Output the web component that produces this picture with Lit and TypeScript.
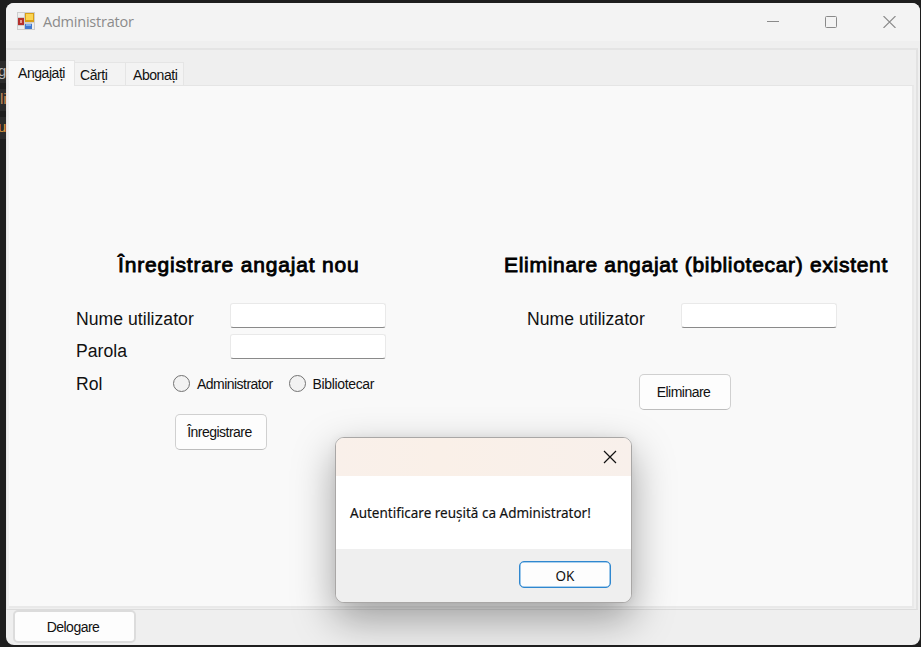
import { LitElement, html, css } from 'lit';
import { customElement, property } from 'lit/decorators.js';

@customElement('message-box')
class MessageBox extends LitElement {
  @property() message = '';

  static styles = css`
    :host {
      display: flex;
      flex-direction: column;
      box-sizing: border-box;
      border: 1px solid #a9a7a6;
      border-radius: 9px;
      overflow: hidden;
      background: #fff;
      font-family: 'Noto Sans', sans-serif;
      color: #111;
      box-shadow: 0 16px 40px 1px rgba(0, 0, 0, 0.34), 0 0 10px rgba(0, 0, 0, 0.06);
    }
    .bar {
      height: 38px;
      display: flex;
      justify-content: flex-end;
      background: linear-gradient(90deg, #f9f0ea, #faf0e8 35%, #f8f0eb);
    }
    .bar svg {
      margin: 12px 14px 0 0;
    }
    .body {
      height: 73px;
      display: flex;
      align-items: center;
      padding-left: 14px;
      font-size: 13.5px;
      -webkit-text-stroke: 0.15px #111;
      white-space: nowrap;
    }
    .foot {
      flex: 1;
      background: #efefef;
      display: flex;
      justify-content: flex-end;
      padding: 12px 20px 0 0;
    }
    .ok {
      box-sizing: border-box;
      width: 92px;
      height: 27px;
      border: 1px solid #2f87cf;
      box-shadow: inset 0 0 0 0.6px #5aa3dd;
      border-radius: 5px;
      background: #fdfdfd;
      font: 13.5px 'Noto Sans', sans-serif;
      color: #111;
      padding: 2px 0 0;
    }
  `;

  render() {
    return html`
      <div class="bar">
        <svg width="14" height="14" viewBox="0 0 14 14" fill="none" stroke="#111" stroke-width="1.2">
          <path d="M1 1L13 13M13 1L1 13" />
        </svg>
      </div>
      <div class="body">${this.message}</div>
      <div class="foot"><button class="ok">OK</button></div>
    `;
  }
}

@customElement('app-root')
class AppRoot extends LitElement {
  static styles = css`
    :host {
      display: block;
      position: relative;
      box-sizing: border-box;
      width: 921px;
      height: 647px;
      padding: 3px 1px 2px 6px;
      overflow: hidden;
      background: #1e1e1e;
      font-family: 'Liberation Sans', Arial, sans-serif;
      color: #111;
    }
    .code {
      position: absolute;
      left: 0;
      width: 6px;
      height: 22px;
      font: 15px/20px 'Liberation Sans', sans-serif;
      text-indent: -2px;
      background: #2b2b2b;
    }
    .c1 { top: 61px; color: #b8b8b8; }
    .c2 { top: 89px; color: #c58a55; text-indent: 0; }
    .c3 { top: 117px; color: #dd9a3f; }
    .window {
      position: relative;
      box-sizing: border-box;
      height: 642px;
      border-radius: 8px;
      overflow: hidden;
      background: #efefef;
      display: flex;
      flex-direction: column;
    }
    .titlebar {
      height: 38px;
      flex: none;
      background: #f3f3f3;
      display: flex;
      align-items: center;
      padding: 0 24px 0 11px;
      color: #8b8b8b;
    }
    .name {
      flex: 1;
      padding-left: 8px;
      margin-top: -2px;
      font: 14.5px 'Open Sans', sans-serif;
      letter-spacing: -0.22px;
    }
    .titlebar > svg {
      margin-top: -2px;
    }
    .controls {
      display: flex;
      gap: 46px;
    }
    .frame {
      height: 562px;
      flex: none;
      margin: 7px 2px 0 0;
      box-sizing: border-box;
      border: 1px solid #e0e0e0;
      border-width: 2px 2px 1px 1px;
      border-color: #e4e4e4 #e2e2e2 #dcdcdc #e6e6e6;
      display: flex;
      flex-direction: column;
      padding: 10px 2px 1px 2px;
    }
    .tabs {
      display: flex;
      align-items: flex-end;
      height: 25px;
      flex: none;
      font-size: 14px;
      letter-spacing: -0.45px;
    }
    .tab {
      box-sizing: border-box;
      height: 23px;
      background: #f3f3f3;
      border: 1px solid #e5e5e5;
      border-width: 1px 1px 0 0;
      line-height: 24px;
      white-space: nowrap;
    }
    .tab.active {
      height: 26px;
      margin-bottom: -1px;
      position: relative;
      background: #f9f9f9;
      line-height: 24px;
    }
    .t1 { width: 66px; padding-left: 9px; }
    .t2 { width: 51px; padding-left: 5px; }
    .t3 { width: 58px; padding-left: 7px; }
    .page {
      flex: 1;
      box-sizing: border-box;
      background: #f9f9f9;
      border-top: 1px solid #e5e5e5;
      border-right: 2px solid #e9e9e9;
      border-bottom: 2px solid #e9e9e9;
      display: flex;
      padding-top: 167px;
    }
    .left { width: 451px; }
    .h {
      margin: 0;
      font-size: 21px;
      line-height: 24px;
      font-weight: normal;
      -webkit-text-stroke: 0.85px #000;
      color: #000;
      white-space: nowrap;
    }
    .left .h { padding-left: 109px; letter-spacing: 0.82px; }
    .right .h { padding-left: 44px; letter-spacing: 0.7px; }
    .rows { padding: 26px 0 0 67px; }
    .row {
      display: flex;
      height: 31px;
      font-size: 17.6px;
      line-height: 32px;
    }
    .label { width: 154px; white-space: nowrap; letter-spacing: 0.03px; }
    .low { padding-top: 1px; }
    .input {
      box-sizing: border-box;
      width: 156px;
      height: 25px;
      background: #fff;
      border: 1px solid #e9e9e9;
      border-bottom: 1px solid #8a8a8a;
      border-radius: 3px;
    }
    .roles { padding-top: 3px; }
    .roles .label { width: 97px; }
    .radio {
      display: flex;
      align-items: center;
      gap: 7px;
      font-size: 14px;
      letter-spacing: -0.53px;
      margin-right: 16px;
      height: 31px;
      white-space: nowrap;
    }
    .radio + .radio { letter-spacing: -0.35px; }
    .dot {
      box-sizing: border-box;
      width: 17px;
      height: 17px;
      margin-top: -1px;
      border: 1.4px solid #737373;
      border-radius: 50%;
      background: #f2f2f2;
    }
    .btn {
      box-sizing: border-box;
      display: block;
      width: 92px;
      height: 36px;
      border: 1px solid #d0d0d0;
      border-bottom-color: #bdbdbd;
      border-radius: 5px;
      background: #fdfdfd;
      font: 14px 'Liberation Sans', Arial, sans-serif;
      letter-spacing: -0.52px;
      color: #111;
      padding: 0 3px 0 0;
    }
    .reg { margin: 15px 0 0 166px; }
    .del { margin: 40px 0 0 179px; }
    .out {
      width: 123px;
      height: 33px;
      flex: none;
      margin: 0 0 0 7px;
      border-width: 2px;
      border-color: #dcdcdc;
    }
    .popup {
      position: absolute;
      left: 329px;
      top: 434px;
      width: 297px;
      height: 166px;
    }
  `;

  render() {
    return html`
      <div class="code c1">g</div>
      <div class="code c2">li</div>
      <div class="code c3">u</div>
      <div class="window">
        <div class="titlebar">
          <svg width="18" height="18" viewBox="0 0 18 18">
            <rect width="18" height="18" fill="#cdcdcd" />
            <path d="M1 1h6v4H1zM1 14h6v3H1zM15 11h2v6h-2z" fill="#eee" />
            <rect x="1" y="6" width="6" height="7" fill="#b5302c" />
            <rect x="3" y="8" width="2" height="3" fill="#e59a90" />
            <rect x="8" y="1" width="9" height="9" fill="#d99f16" />
            <rect x="9" y="2" width="7" height="6" fill="#fbd552" />
            <rect x="8" y="12" width="7" height="5" fill="#3f78d0" />
            <rect x="9" y="12" width="5" height="2" fill="#7fb0f2" />
          </svg>
          <span class="name">Administrator</span>
          <div class="controls">
            <svg width="12" height="12"><path d="M0 5.5H12" stroke="#8a8a8a" /></svg>
            <svg width="12" height="12"><rect x=".5" y=".5" width="11" height="11" rx="1" fill="none" stroke="#8a8a8a" /></svg>
            <svg width="13" height="12"><path d="M.5 0L12.5 12M12.5 0L.5 12" stroke="#8a8a8a" stroke-width="1.1" /></svg>
          </div>
        </div>
        <div class="frame">
          <div class="tabs">
            <div class="tab active t1">Angajați</div>
            <div class="tab t2">Cărți</div>
            <div class="tab t3">Abonați</div>
          </div>
          <div class="page">
            <section class="left">
              <h2 class="h">Înregistrare angajat nou</h2>
              <div class="rows">
                <div class="row"><span class="label">Nume utilizator</span><div class="input"></div></div>
                <div class="row"><span class="label low">Parola</span><div class="input"></div></div>
                <div class="row roles">
                  <span class="label">Rol</span>
                  <span class="radio"><i class="dot"></i>Administrator</span>
                  <span class="radio"><i class="dot"></i>Bibliotecar</span>
                </div>
              </div>
              <button class="btn reg">Înregistrare</button>
            </section>
            <section class="right">
              <h2 class="h">Eliminare angajat (bibliotecar) existent</h2>
              <div class="rows">
                <div class="row"><span class="label">Nume utilizator</span><div class="input"></div></div>
              </div>
              <button class="btn del">Eliminare</button>
            </section>
          </div>
        </div>
        <button class="btn out">Delogare</button>
        <message-box class="popup" message="Autentificare reușită ca Administrator!"></message-box>
      </div>
    `;
  }
}
